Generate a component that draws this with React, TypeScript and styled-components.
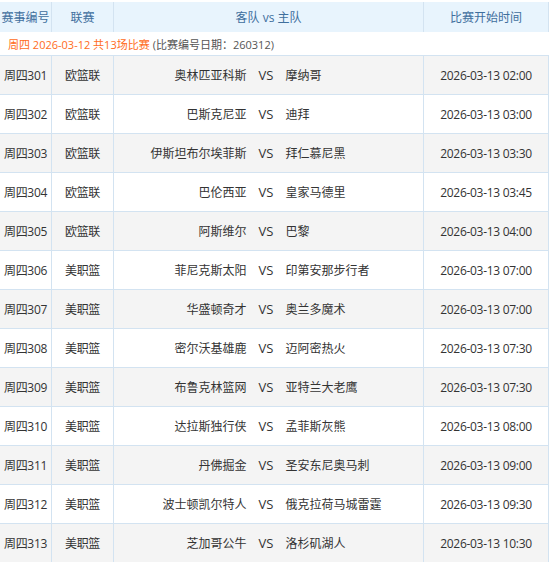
import React from "react";
import styled, { createGlobalStyle } from "styled-components";

const Global = createGlobalStyle`
  html, body { margin: 0; padding: 0; background: #fff; }
  body {
    font-family: "Open Sans", "Noto Sans CJK SC", sans-serif;
    font-size: 12px;
    color: #333;
  }
`;

const Page = styled.div`
  padding-top: 2px;
  width: 549px;
`;

const COLS = "52px 62px 310px 125px";
const LINE = "#d3e3f1";

const HeaderRow = styled.div`
  display: grid;
  grid-template-columns: ${COLS};
  height: 30px;
  background: #e8f4fd;
`;

const HeadCell = styled.div`
  display: flex;
  align-items: center;
  justify-content: center;
  border-right: 1px solid ${LINE};
  color: #3f6f9d;
  white-space: nowrap;
`;

const DateBar = styled.div`
  height: 24px;
  display: flex;
  align-items: center;
  padding-left: 8px;
  border-bottom: 1px solid ${LINE};
  box-sizing: border-box;
  white-space: nowrap;
  font-size: 11px;
`;

const DateMain = styled.span`
  color: #ff6c22;
`;

const DateNote = styled.span`
  color: #555;
  margin-left: 3px;
`;

const Row = styled.div<{ $alt: boolean }>`
  display: grid;
  grid-template-columns: ${COLS};
  height: 39px;
  box-sizing: border-box;
  border-bottom: 1px solid ${LINE};
  background: ${(p) => (p.$alt ? "#f4f4f4" : "#ffffff")};
`;

const Cell = styled.div`
  display: flex;
  align-items: center;
  justify-content: center;
  border-right: 1px solid ${LINE};
  white-space: nowrap;
  letter-spacing: -0.3px;
`;

const Match = styled.div`
  display: grid;
  grid-template-columns: 1fr auto 1fr;
  align-items: center;
  column-gap: 12px;
  padding-right: 5px;
  border-right: 1px solid ${LINE};
  white-space: nowrap;
`;

const Away = styled.span`
  text-align: right;
`;

const Vs = styled.span`
  font-size: 13px;
`;

const Home = styled.span`
  text-align: left;
`;

const games: [string, string, string, string, string][] = [
  ["周四301", "欧篮联", "奥林匹亚科斯", "摩纳哥", "02:00"],
  ["周四302", "欧篮联", "巴斯克尼亚", "迪拜", "03:00"],
  ["周四303", "欧篮联", "伊斯坦布尔埃菲斯", "拜仁慕尼黑", "03:30"],
  ["周四304", "欧篮联", "巴伦西亚", "皇家马德里", "03:45"],
  ["周四305", "欧篮联", "阿斯维尔", "巴黎", "04:00"],
  ["周四306", "美职篮", "菲尼克斯太阳", "印第安那步行者", "07:00"],
  ["周四307", "美职篮", "华盛顿奇才", "奥兰多魔术", "07:00"],
  ["周四308", "美职篮", "密尔沃基雄鹿", "迈阿密热火", "07:30"],
  ["周四309", "美职篮", "布鲁克林篮网", "亚特兰大老鹰", "07:30"],
  ["周四310", "美职篮", "达拉斯独行侠", "孟菲斯灰熊", "08:00"],
  ["周四311", "美职篮", "丹佛掘金", "圣安东尼奥马刺", "09:00"],
  ["周四312", "美职篮", "波士顿凯尔特人", "俄克拉荷马城雷霆", "09:30"],
  ["周四313", "美职篮", "芝加哥公牛", "洛杉矶湖人", "10:30"],
];

export default function App() {
  return (
    <Page>
      <Global />
      <HeaderRow>
        <HeadCell>赛事编号</HeadCell>
        <HeadCell>联赛</HeadCell>
        <HeadCell>客队 vs 主队</HeadCell>
        <HeadCell>比赛开始时间</HeadCell>
      </HeaderRow>
      <DateBar>
        <DateMain>周四 2026-03-12 共13场比赛</DateMain>
        <DateNote>(比赛编号日期：260312)</DateNote>
      </DateBar>
      {games.map(([id, league, away, home, time], i) => (
        <Row key={id} $alt={i % 2 === 0}>
          <Cell>{id}</Cell>
          <Cell>{league}</Cell>
          <Match>
            <Away>{away}</Away>
            <Vs>VS</Vs>
            <Home>{home}</Home>
          </Match>
          <Cell>2026-03-13 {time}</Cell>
        </Row>
      ))}
    </Page>
  );
}
